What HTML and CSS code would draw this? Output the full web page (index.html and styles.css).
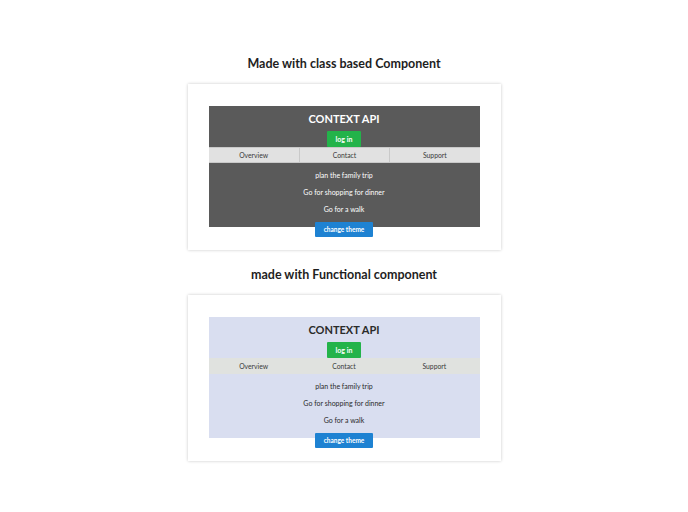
FILE: index.html
```html
<!DOCTYPE html>
<html>
<head>
<meta charset="utf-8">
<link rel="stylesheet" href="styles.css">
</head>
<body>
<section class="demo">
  <h2 class="demo-title">Made with class based Component</h2>
  <div class="card">
    <div class="app dark">
      <h1 class="app-title">CONTEXT API</h1>
      <button class="btn-login">log in</button>
      <nav class="nav">
        <span class="nav-item">Overview</span>
        <span class="nav-item">Contact</span>
        <span class="nav-item">Support</span>
      </nav>
      <ul class="todos">
        <li>plan the family trip</li>
        <li>Go for shopping for dinner</li>
        <li>Go for a walk</li>
      </ul>
      <button class="btn-theme">change theme</button>
    </div>
  </div>
</section>
<section class="demo">
  <h2 class="demo-title">made with Functional component</h2>
  <div class="card">
    <div class="app light">
      <h1 class="app-title">CONTEXT API</h1>
      <button class="btn-login">log in</button>
      <nav class="nav">
        <span class="nav-item">Overview</span>
        <span class="nav-item">Contact</span>
        <span class="nav-item">Support</span>
      </nav>
      <ul class="todos">
        <li>plan the family trip</li>
        <li>Go for shopping for dinner</li>
        <li>Go for a walk</li>
      </ul>
      <button class="btn-theme">change theme</button>
    </div>
  </div>
</section>
</body>
</html>
```
FILE: styles.css
```css
html, body {
  margin: 0;
  padding: 0;
  background: #ffffff;
  font-family: Lato, "Liberation Sans", sans-serif;
}
body {
  padding-top: 53px;
  display: flex;
  flex-direction: column;
  align-items: center;
}
.demo {
  display: flex;
  flex-direction: column;
  align-items: center;
  margin-bottom: 14px;
}
.demo-title {
  margin: 0 0 9px 0;
  font-size: 12.5px;
  line-height: 22px;
  font-weight: 700;
  color: #1e1e1e;
}
.card {
  width: 313px;
  box-sizing: border-box;
  padding: 22px 21px 23px;
  background: #fff;
  box-shadow: 0 0 3px rgba(0,0,0,0.22);
}
.app {
  display: flex;
  flex-direction: column;
  align-items: center;
}
.app.dark {
  background: #5a5a5a;
  color: #ffffff;
}
.app.light {
  background: #d9def0;
  color: #2a2a2a;
}
.app-title {
  margin: 0;
  font-size: 11px;
  line-height: 25px;
  font-weight: 700;
}
.btn-login {
  margin: 0;
  border: 0;
  width: 34px;
  height: 16px;
  padding: 0;
  background: #23b34a;
  color: #fff;
  font-family: inherit;
  font-size: 7px;
  font-weight: 700;
  border-radius: 1px;
}
.nav {
  align-self: stretch;
  display: grid;
  grid-template-columns: 1fr 1fr 1fr;
  height: 16px;
}
.dark .nav {
  background: #e1e1e1;
  border-top: 1px solid #c9c9c9;
  border-bottom: 1px solid #c9c9c9;
  box-sizing: border-box;
}
.light .nav {
  background: #e0e2df;
}
.nav-item {
  display: flex;
  align-items: center;
  justify-content: center;
  font-size: 6.8px;
  color: #3a3a3a;
}
.dark .nav-item + .nav-item {
  border-left: 1px solid #c9c9c9;
}
.todos {
  list-style: none;
  margin: 0;
  padding: 3.5px 0 0;
  text-align: center;
}
.todos li {
  font-size: 7px;
  line-height: 17px;
}
.btn-theme {
  margin: 4.5px 0 -10px;
  border: 0;
  width: 58px;
  height: 15px;
  padding: 0;
  background: #1e82d2;
  color: #fff;
  font-family: inherit;
  font-size: 6.5px;
  font-weight: 700;
  border-radius: 1px;
}
```
